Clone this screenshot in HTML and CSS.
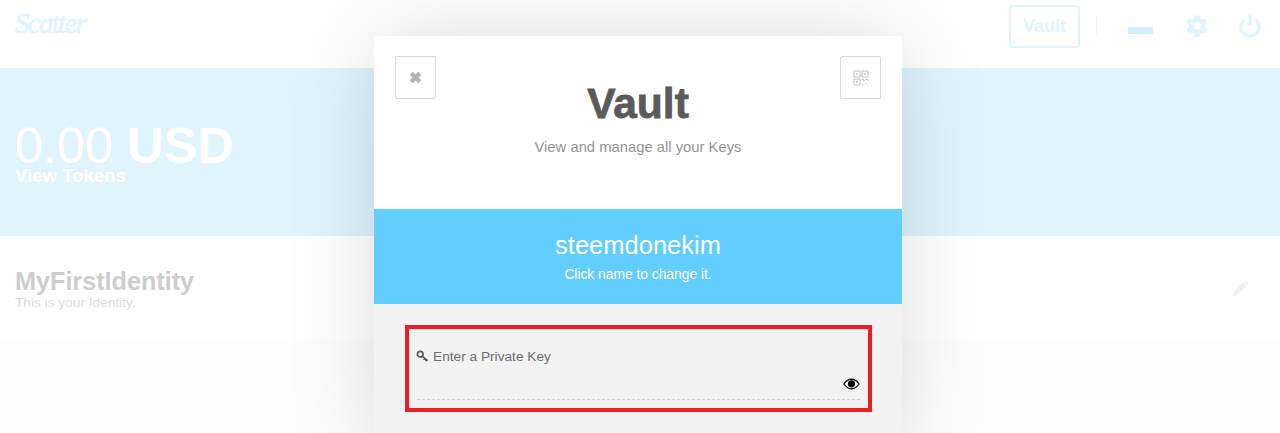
FILE: index.html
```html
<!DOCTYPE html>
<html lang="en">
<head>
    <meta charset="UTF-8">
    <title>Scatter - Vault</title>
    <link rel="stylesheet" href="styles.css">
</head>
<body>
    <!-- Background app -->
    <header class="topbar">
        <div class="logo">Scatter</div>
        <div class="top-actions">
            <div class="vault-button">Vault</div>
            <div class="divider"></div>
            <div class="minimize"></div>
            <svg class="top-icon gear" viewBox="0 0 24 24"><path d="M19.4 13c.1-.3.1-.7.1-1s0-.7-.1-1l2.1-1.6c.2-.2.2-.4.1-.6l-2-3.5c-.1-.2-.4-.3-.6-.2l-2.5 1c-.5-.4-1.100-.7-1.700-1l-.4-2.600c0-.3-.2-.5-.5-.5h-4c-.3 0-.5.2-.5.500l-.4 2.600c-.6.3-1.200.6-1.700 1l-2.500-1c-.2-.1-.5 0-.6.2l-2 3.500c-.1.200-.1.400.1.600L4.600 11c-.1.300-.1.700-.1 1s0 .7.1 1l-2.100 1.600c-.2.200-.2.400-.1.600l2 3.500c.1.200.4.300.6.200l2.500-1c.5.400 1.100.700 1.700 1l.4 2.600c0 .3.200.5.500.5h4c.3 0 .5-.2.500-.5l.4-2.600c.6-.3 1.200-.6 1.700-1l2.500 1c.2.100.5 0 .6-.2l2-3.500c.1-.2.100-.4-.1-.6zM12 15.500a3.500 3.500 0 1 1 0-7 3.500 3.500 0 0 1 0 7z"/></svg>
            <svg class="top-icon power" viewBox="0 0 24 24"><path d="M12 2v10M6.800 6.200a8.500 8.500 0 1 0 10.400 0"/></svg>
        </div>
    </header>

    <section class="balance">
        <div class="amount">0.00 <b>USD</b></div>
        <div class="tokens">View Tokens</div>
    </section>

    <section class="identity">
        <div>
            <div class="identity-name">MyFirstIdentity</div>
            <div class="identity-note">This is your Identity.</div>
        </div>
        <svg class="pencil" viewBox="0 0 24 24"><path d="M3 21l1.200-5.400L15.800 4l4.200 4.200L8.400 19.800zM17 2.800l1-1 4.200 4.200-1 1z"/></svg>
    </section>

    <!-- Vault modal -->
    <div class="modal">
        <div class="modal-head">
            <button class="icon-button">
                <svg class="close-icon" viewBox="1.500 1.500 9 9"><path d="M3 3l6 6M9 3l-6 6"/></svg>
            </button>
            <button class="icon-button">
                <svg class="qr-icon" viewBox="0 0 16 16">
                    <path d="M1 1h6v6H1zM9 1h6v6H9zM1 9h6v6H1z"/>
                    <path d="M3.500 3.500h1v1h-1zM11.500 3.500h1v1h-1zM3.500 11.500h1v1h-1zM9 9.500h2v2.500M12.500 9.500h2.500v1.500M9 14.500h1M12 13.500h1M14.500 14.500h.5"/>
                </svg>
            </button>
            <h1>Vault</h1>
            <p>View and manage all your Keys</p>
        </div>
        <div class="name-band">
            <div class="key-name">steemdonekim</div>
            <div class="key-hint">Click name to change it.</div>
        </div>
        <div class="modal-body">
            <div class="highlight">
                <label class="key-label">
                    <svg class="key-icon" viewBox="0 0 14 14"><circle cx="4.500" cy="4.500" r="3"/><path d="M6.800 6.800L12.500 11.500M9.500 9l-1.200 1.500M11.500 10.500l-1 1.500"/></svg>
                    Enter a Private Key
                </label>
                <div class="key-input">
                    <svg class="eye-icon" viewBox="0 0 18 12"><path class="eye-outline" d="M1 6c2-3 4.800-5 8-5s6 2 8 5c-2 3-4.800 5-8 5S3 9 1 6z"/><circle cx="9" cy="5.800" r="3.800"/></svg>
                </div>
            </div>
        </div>
    </div>
</body>
</html>
```

FILE: styles.css
```css
:root {
    --sky: #dff4fd;
    --band: #62cdff;
    --text-dark: #5a5a5a;
    --text-muted: #949494;
    --alert: #ed1c24;
}

html, body {
    height: 100%;
}

body {
    margin: 0;
    overflow: hidden;
    position: relative;
    background: #fdfdfd;
    font-family: "Liberation Sans", Arial, sans-serif;
}

.topbar {
    height: 68px;
    padding: 0 15px;
    box-sizing: border-box;
    background: #fff;
    display: flex;
    align-items: center;
    justify-content: space-between;
}

.logo {
    font-family: "Liberation Serif", serif;
    font-style: italic;
    font-size: 29px;
    line-height: 30px;
    color: #dff4fd;
    margin-top: -22px;
    letter-spacing: -1.700px;
    -webkit-text-stroke: 0.6px #dff4fd;
}

.top-actions {
    display: flex;
    align-items: center;
    margin-top: -16px;
}

.vault-button {
    width: 71px;
    height: 43px;
    box-sizing: border-box;
    border: 2px solid #e0f4fd;
    border-radius: 3px;
    color: #e0f4fd;
    font-size: 18px;
    font-weight: bold;
    display: flex;
    align-items: center;
    justify-content: center;
}

.divider {
    width: 1px;
    height: 20px;
    background: #f1f1f1;
    margin: 0 31px 0 16px;
}

.minimize {
    width: 25px;
    height: 7px;
    background: #d4eff9;
    border-radius: 1px;
    margin: 8px 31px 0 0;
}

.top-icon {
    width: 26px;
    height: 26px;
}

.gear {
    fill: #e0f4fd;
    margin-right: 27px;
}

.power {
    fill: none;
    stroke: #e0f4fd;
    stroke-width: 3;
    margin-right: 2px;
}

.balance {
    height: 168px;
    padding: 0 15px;
    box-sizing: border-box;
    background: var(--sky);
    color: #fff;
    display: flex;
    flex-direction: column;
    justify-content: center;
}

.amount {
    font-size: 50.500px;
    line-height: 44px;
    margin-top: 4px;
}

.tokens {
    font-size: 18.600px;
    font-weight: bold;
    line-height: 16px;
}

.identity {
    height: 104px;
    padding: 0 30px 0 15px;
    box-sizing: border-box;
    background: #fff;
    display: flex;
    align-items: center;
    justify-content: space-between;
}

.identity-name {
    font-size: 25.200px;
    font-weight: bold;
    line-height: 28px;
    color: #cdcdcd;
}

.identity-note {
    font-size: 13.700px;
    line-height: 14px;
    color: #dcdcdc;
    margin-top: 1px;
}

.pencil {
    width: 20px;
    height: 20px;
    fill: #f0f0f0;
    margin-top: 2px;
}

.modal {
    position: absolute;
    top: 36px;
    left: 374px;
    width: 528px;
    height: 420px;
    background: #f2f2f2;
    border-radius: 2px 2px 0 0;
    box-shadow: 0 0 90px rgba(0, 0, 0, 0.14);
}

.modal-head {
    height: 173px;
    padding: 20px 21px 0;
    box-sizing: border-box;
    background: #fff;
    border-radius: 2px 2px 0 0;
    display: flex;
    flex-wrap: wrap;
    justify-content: space-between;
    align-content: flex-start;
    text-align: center;
}

.icon-button {
    width: 41px;
    height: 43px;
    padding: 0;
    background: #fff;
    border: 1px solid #d8d8d8;
    border-radius: 2px;
    display: flex;
    align-items: center;
    justify-content: center;
}

.close-icon {
    width: 13px;
    height: 13px;
    fill: none;
    stroke: #b4b4b4;
    stroke-width: 3;
}

.qr-icon {
    width: 16px;
    height: 16px;
    fill: none;
    stroke: #c0c0c0;
    stroke-width: 1;
}

.modal-head h1 {
    width: 100%;
    margin: -19px 0 0;
    font-size: 42.500px;
    line-height: 48px;
    color: var(--text-dark);
    -webkit-text-stroke: 0.8px var(--text-dark);
}

.modal-head p {
    width: 100%;
    margin: 10px 0 0;
    font-size: 14.800px;
    line-height: 18px;
    color: var(--text-muted);
}

.name-band {
    height: 95px;
    box-sizing: border-box;
    padding-top: 22px;
    background: var(--band);
    color: #fff;
    text-align: center;
}

.key-name {
    font-size: 25.500px;
    line-height: 28px;
}

.key-hint {
    font-size: 13.800px;
    line-height: 16px;
    margin-top: 8px;
}

.modal-body {
    padding: 21px 30px 0 31px;
}

.highlight {
    height: 87px;
    padding: 15px 8px 0 8px;
    box-sizing: border-box;
    border: 4px solid var(--alert);
}

.key-label {
    display: flex;
    align-items: center;
    gap: 4px;
    height: 24px;
    font-size: 13.700px;
    color: #6e6e6e;
}

.key-icon {
    width: 13px;
    height: 13px;
    margin-left: -1px;
    fill: none;
    stroke: #555;
    stroke-width: 1.800;
}

.key-input {
    height: 22px;
    border-bottom: 1px dashed #d0d0d0;
    display: flex;
    justify-content: flex-end;
    align-items: flex-end;
    padding-bottom: 9px;
}

.eye-icon {
    width: 17px;
    height: 12px;
}

.eye-outline {
    fill: #fff;
    stroke: #111;
    stroke-width: 1.400;
}
```
